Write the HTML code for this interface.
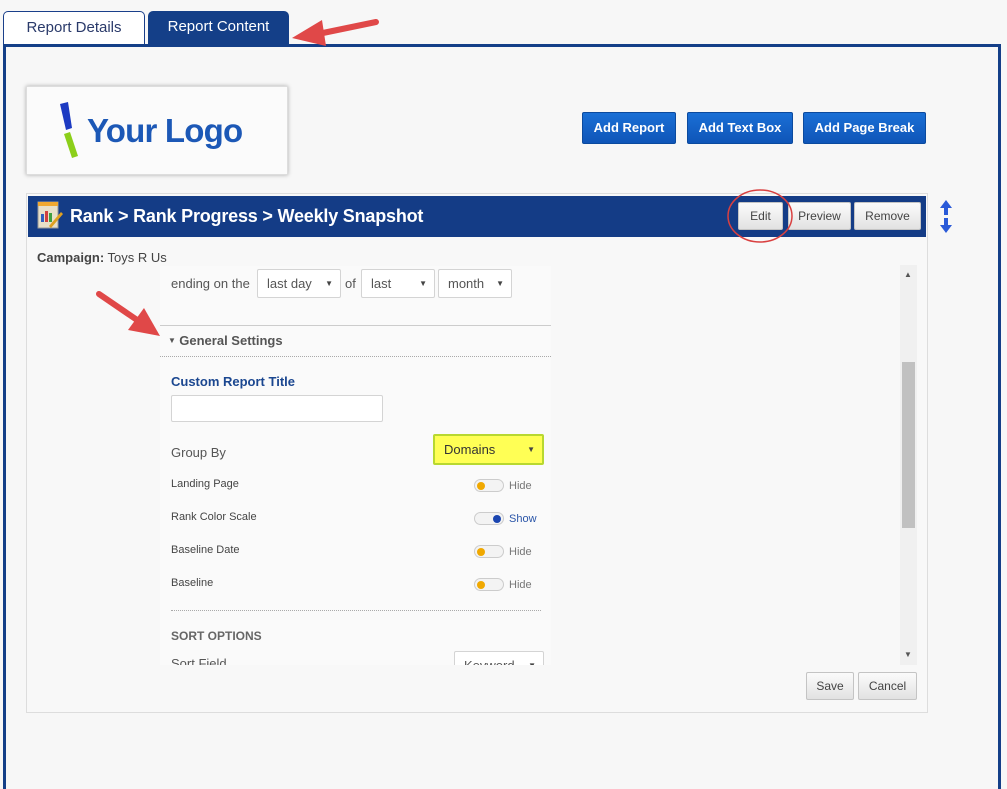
<!DOCTYPE html>
<html><head><meta charset="utf-8"><style>
*{box-sizing:border-box;margin:0;padding:0}
html,body{width:1007px;height:789px;overflow:hidden}
body{background:#f7f7f7;font-family:"Liberation Sans",sans-serif;position:relative}
.a{position:absolute}
.tab{position:absolute;top:11px;height:34px;border-radius:5px 5px 0 0;font-size:15px;text-align:center;line-height:32px}
.btn{position:absolute;top:112px;height:32px;background:linear-gradient(#1a6fd6,#0f55b8);border:1px solid #0b4a9e;border-radius:2px;color:#fff;font-weight:bold;font-size:13px;text-align:center;line-height:30px}
.gb{position:absolute;height:28px;background:linear-gradient(#fbfbfb,#e2e2e2);border:1px solid #c4c4c4;border-radius:2px;font-size:12px;color:#444;text-align:center;line-height:26px}
.sel{position:absolute;height:29px;background:#fff;border:1px solid #d4d4d4;border-radius:2px;font-size:13px;color:#555;line-height:27px;padding-left:9px}
.sel:after{content:"▼";position:absolute;right:7px;font-size:8px;color:#444;top:0}
.lbl{position:absolute;font-size:11px;color:#444;left:171px}
.tg{position:absolute;left:474px;width:30px;height:13px;border:1px solid #ccc;border-radius:7px;background:#f3f3f3}
.tg i{position:absolute;top:2px;width:8px;height:8px;border-radius:50%}
.tt{position:absolute;left:509px;font-size:11px;color:#777}
</style></head><body>
<div class="tab" style="left:3px;width:142px;background:#fff;border:1px solid #1a3f8a;border-bottom:none;color:#2a3a6a">Report Details</div>
<div class="tab" style="left:148px;width:141px;background:#143f88;color:#fff">Report Content</div>
<div class="a" style="left:3px;top:44px;width:998px;height:745px;border:3px solid #143f88;border-bottom:none;background:#f7f7f7"></div>
<!-- logo -->
<div class="a" style="left:26px;top:86px;width:262px;height:89px;background:#fbfbfb;border:1px solid #ddd;box-shadow:0 0 4px rgba(0,0,0,.3)"></div>
<svg class="a" style="left:56px;top:100px" width="30" height="60"><path d="M4 4 L12 2 L16 28 L10 30Z" fill="#1d3bc2"/><path d="M8 34 L14 32 L22 56 L16 58Z" fill="#8ccf1a"/></svg>
<div class="a" style="left:87px;top:112px;font-size:33px;font-weight:bold;color:#1c58b6;letter-spacing:-0.8px">Your Logo</div>
<div class="btn" style="left:582px;width:94px">Add Report</div>
<div class="btn" style="left:687px;width:106px">Add Text Box</div>
<div class="btn" style="left:803px;width:123px">Add Page Break</div>
<!-- panel -->
<div class="a" style="left:26px;top:193px;width:902px;height:520px;background:#f8f8f8;border:1px solid #ddd"></div>
<div class="a" style="left:28px;top:196px;width:898px;height:41px;background:#143c86"></div>
<svg class="a" style="left:35px;top:200px" width="30" height="32"><rect x="3" y="2" width="20" height="26" fill="#e8e0c8" stroke="#999"/><rect x="3" y="2" width="20" height="4" fill="#f0a830"/><rect x="6" y="14" width="3" height="8" fill="#3060c0"/><rect x="10" y="11" width="3" height="11" fill="#d04040"/><rect x="14" y="13" width="3" height="9" fill="#40a040"/><path d="M14 26 L26 12 L28 14 L16 28Z" fill="#e0a020"/></svg>
<div class="a" style="left:70px;top:206px;font-size:18px;font-weight:bold;color:#fff;letter-spacing:-0.2px">Rank &gt; Rank Progress &gt; Weekly Snapshot</div>
<div class="gb" style="left:738px;top:202px;width:45px">Edit</div>
<div class="gb" style="left:788px;top:202px;width:63px">Preview</div>
<div class="gb" style="left:854px;top:202px;width:67px">Remove</div>
<svg class="a" style="left:725px;top:187px" width="70" height="58"><ellipse cx="35" cy="29" rx="32" ry="26" fill="none" stroke="#d94040" stroke-width="1.5"/></svg>
<svg class="a" style="left:938px;top:199px" width="16" height="36"><path d="M8 1 L14 9 L10 9 L10 16 L6 16 L6 9 L2 9Z" fill="#2a5ad8"/><path d="M8 34 L14 26 L10 26 L10 19 L6 19 L6 26 L2 26Z" fill="#2a5ad8"/></svg>
<div class="a" style="left:37px;top:250px;font-size:13px;color:#444"><b>Campaign:</b> Toys R Us</div>
<!-- scroll content -->
<div class="a" style="left:160px;top:266px;width:391px;height:399px;background:#fafafa"></div>
<div class="a" style="left:900px;top:265px;width:17px;height:400px;background:#f0f0f0"></div>
<div class="a" style="left:902px;top:362px;width:13px;height:166px;background:#c1c1c1"></div>
<div class="a" style="left:904px;top:270px;font-size:8px;color:#555">▲</div>
<div class="a" style="left:904px;top:650px;font-size:8px;color:#555">▼</div>
<div class="a" style="left:171px;top:276px;font-size:13px;color:#555">ending on the</div>
<div class="sel" style="left:257px;top:269px;width:84px">last day</div>
<div class="a" style="left:345px;top:276px;font-size:13px;color:#555">of</div>
<div class="sel" style="left:361px;top:269px;width:74px">last</div>
<div class="sel" style="left:438px;top:269px;width:74px">month</div>
<div class="a" style="left:160px;top:325px;width:391px;border-top:1px solid #ccc"></div>
<div class="a" style="left:168px;top:333px;font-size:12px;color:#555"><span style="font-size:8px;vertical-align:2px">▼</span> <b style="font-size:13px">General Settings</b></div>
<div class="a" style="left:160px;top:356px;width:391px;border-top:1px dotted #aaa"></div>
<div class="a" style="left:171px;top:374px;font-size:13px;font-weight:bold;color:#1b4790">Custom Report Title</div>
<div class="a" style="left:171px;top:395px;width:212px;height:27px;background:#fff;border:1px solid #d4d4d4;border-radius:2px"></div>
<div class="a" style="left:171px;top:445px;font-size:13px;color:#555">Group By</div>
<div class="sel" style="left:433px;top:434px;width:111px;height:31px;background:#ffff55;border:2px solid #b8d830;line-height:27px;color:#333">Domains</div>
<div class="lbl" style="top:478px">Landing Page</div><div class="tg" style="top:479px"><i style="left:2px;background:#f0a800"></i></div><div class="tt" style="top:480px">Hide</div>
<div class="lbl" style="top:511px">Rank Color Scale</div><div class="tg" style="top:512px"><i style="right:2px;background:#1a45b0"></i></div><div class="tt" style="top:513px;color:#2a55a8">Show</div>
<div class="lbl" style="top:544px">Baseline Date</div><div class="tg" style="top:545px"><i style="left:2px;background:#f0a800"></i></div><div class="tt" style="top:546px">Hide</div>
<div class="lbl" style="top:577px">Baseline</div><div class="tg" style="top:578px"><i style="left:2px;background:#f0a800"></i></div><div class="tt" style="top:579px">Hide</div>
<div class="a" style="left:171px;top:610px;width:370px;border-top:1px dotted #aaa"></div>
<div class="a" style="left:171px;top:629px;font-size:12px;font-weight:bold;color:#666">SORT OPTIONS</div>
<div class="a" style="left:160px;top:651px;width:391px;height:14px;overflow:hidden"><div style="position:absolute;left:11px;top:5px;font-size:13px;color:#555">Sort Field</div><div class="sel" style="left:294px;top:0;width:90px">Keyword</div></div>
<div class="a" style="left:160px;top:665px;width:740px;height:5px;background:#f8f8f8"></div>
<div class="gb" style="left:806px;top:672px;width:48px">Save</div>
<div class="gb" style="left:858px;top:672px;width:59px">Cancel</div>
<!-- arrows -->
<svg class="a" style="left:0;top:0" width="1007" height="789">
<path d="M376 22 L318 34" stroke="#e04848" stroke-width="6" stroke-linecap="round"/><path d="M292 38 L322 20 L326 46Z" fill="#e04848"/>
<path d="M99 294 L140 322" stroke="#e04848" stroke-width="6" stroke-linecap="round"/><path d="M160 336 L128 330 L144 308Z" fill="#e04848"/>
</svg>
</body></html>
